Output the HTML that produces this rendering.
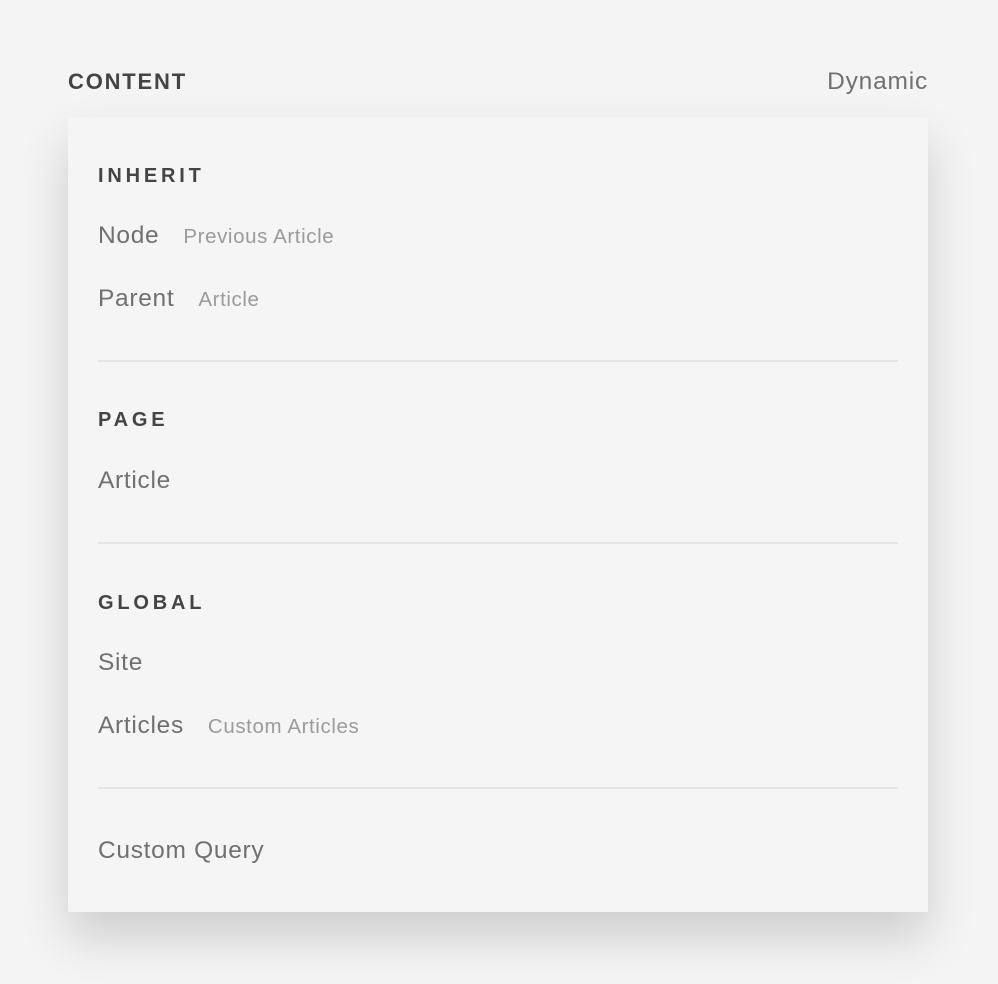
<!DOCTYPE html>
<html><head><style>
body{margin:0;width:998px;height:984px;background:#f4f4f4;font-family:"Liberation Sans",sans-serif;position:relative;overflow:hidden}
.a{position:absolute;white-space:nowrap;line-height:1}
.h{font-size:22px;font-weight:bold;color:#444;letter-spacing:1.8px}
.card{position:absolute;left:68px;top:117px;width:860px;height:795px;background:#f5f5f5;box-shadow:0 25px 45px rgba(0,0,0,0.16)}
.s{font-size:20px;font-weight:bold;color:#444;letter-spacing:3.8px}
.i{font-size:24.5px;color:#707070;letter-spacing:0.7px}
.i span{font-size:20.5px;color:#9b9b9b;margin-left:24px;letter-spacing:0.6px}
.l{position:absolute;left:30px;width:800px;height:2px;background:#e4e4e4}
</style></head><body>
<div class="a h" style="left:68px;top:71px">CONTENT</div>
<div class="a" style="right:70px;top:70px;font-size:24.5px;color:#707070;letter-spacing:0.8px">Dynamic</div>
<div class="card">
<div class="a s" style="left:30px;top:49px">INHERIT</div>
<div class="a i" style="left:30px;top:107px">Node<span>Previous Article</span></div>
<div class="a i" style="left:30px;top:170px">Parent<span>Article</span></div>
<div class="l" style="top:243px"></div>
<div class="a s" style="left:30px;top:293px">PAGE</div>
<div class="a i" style="left:30px;top:352px">Article</div>
<div class="l" style="top:425px"></div>
<div class="a s" style="left:30px;top:476px">GLOBAL</div>
<div class="a i" style="left:30px;top:534px">Site</div>
<div class="a i" style="left:30px;top:597px">Articles<span>Custom Articles</span></div>
<div class="l" style="top:670px"></div>
<div class="a i" style="left:30px;top:722px">Custom Query</div>
</div>
</body></html>
